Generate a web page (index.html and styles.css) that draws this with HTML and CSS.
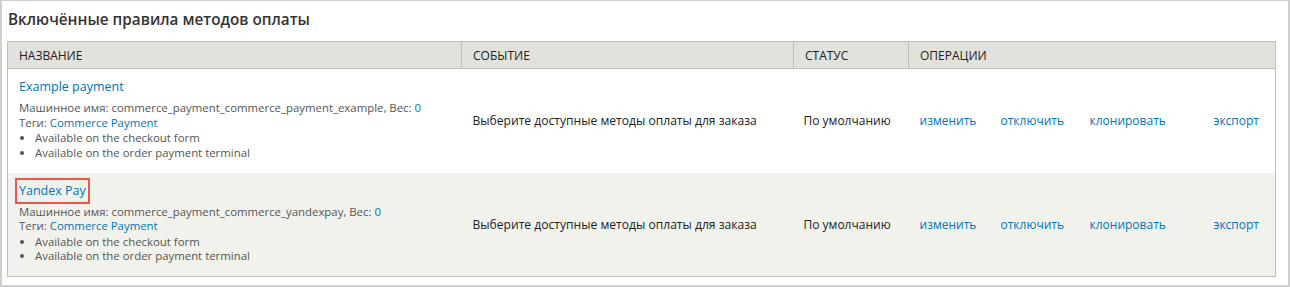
FILE: index.html
```html
<!DOCTYPE html>
<html lang="ru">
<head>
<meta charset="utf-8">
<link rel="stylesheet" href="styles.css">
</head>
<body>
<div class="frame">
  <h2 class="title">Включённые правила методов оплаты</h2>
  <table class="rules">
    <thead>
      <tr>
        <th class="c-name">Название</th>
        <th class="c-event">Событие</th>
        <th class="c-status">Статус</th>
        <th class="c-ops">Операции</th>
      </tr>
    </thead>
    <tbody>
      <tr class="odd">
        <td class="c-name">
          <a class="rule-link" href="#">Example payment</a>
          <div class="desc">
            <div>Машинное имя: commerce_payment_commerce_payment_example, Вес: <a href="#">0</a></div>
            <div>Теги: <a href="#">Commerce Payment</a></div>
            <ul class="caps">
              <li>Available on the checkout form</li>
              <li>Available on the order payment terminal</li>
            </ul>
          </div>
        </td>
        <td class="c-event">Выберите доступные методы оплаты для заказа</td>
        <td class="c-status">По умолчанию</td>
        <td class="c-ops">
          <div class="ops">
            <a href="#" class="op op-edit">изменить</a>
            <a href="#" class="op op-off">отключить</a>
            <a href="#" class="op op-clone">клонировать</a>
            <a href="#" class="op op-export">экспорт</a>
          </div>
        </td>
      </tr>
      <tr class="even">
        <td class="c-name">
          <a class="rule-link highlighted" href="#">Yandex Pay</a>
          <div class="desc">
            <div>Машинное имя: commerce_payment_commerce_yandexpay, Вес: <a href="#">0</a></div>
            <div>Теги: <a href="#">Commerce Payment</a></div>
            <ul class="caps">
              <li>Available on the checkout form</li>
              <li>Available on the order payment terminal</li>
            </ul>
          </div>
        </td>
        <td class="c-event">Выберите доступные методы оплаты для заказа</td>
        <td class="c-status">По умолчанию</td>
        <td class="c-ops">
          <div class="ops">
            <a href="#" class="op op-edit">изменить</a>
            <a href="#" class="op op-off">отключить</a>
            <a href="#" class="op op-clone">клонировать</a>
            <a href="#" class="op op-export">экспорт</a>
          </div>
        </td>
      </tr>
    </tbody>
  </table>
</div>
</body>
</html>
```
FILE: styles.css
```css
html, body {
  margin: 0;
  padding: 0;
  background: #fff;
}
body {
  font-family: "Open Sans", "DejaVu Sans", sans-serif;
  color: #333;
  width: 1290px;
  height: 287px;
  overflow: hidden;
}
.frame {
  box-sizing: border-box;
  width: 1290px;
  height: 287px;
  border: 2px solid #cfcfcf;
  border-top: 1px solid #cfcfcf;
  padding: 0 12px 0 5px;
}
.title {
  margin: 0;
  padding: 8px 0 0 1px;
  height: 30px;
  box-sizing: border-box;
  font-size: 15.3px;
  font-weight: 600;
  color: #333;
}
.rules {
  margin-top: 10px;
  width: 1269px;
  border-collapse: collapse;
  border: 1px solid #bebfb9;
  font-size: 12px;
}
.rules th {
  background: #e1e2dc;
  text-align: left;
  font-weight: 400;
  text-transform: uppercase;
  color: #222;
  height: 26px;
  padding: 0 11px;
  border-bottom: 1px solid #bebfb9;
  border-left: 1px solid #bebfb9;
}
.rules th:first-child { border-left: none; }
.rules td {
  vertical-align: middle;
  padding: 0 11px;
  color: #222;
}
.rules th.c-name { width: 431px; }
.rules th.c-event { width: 309px; }
.rules th.c-status { width: 92px; }
tr.odd { background: #fff; height: 104px; }
tr.even { background: #f2f2ec; height: 104px; }
.rules td.c-name { padding-top: 0; padding-bottom: 3px; }
.rules td.c-event { font-size: 12.1px; }
.rules td.c-status { padding-left: 10px; }
a { color: #0074bd; text-decoration: none; }
.rule-link {
  display: inline-block;
  font-size: 12.5px;
  line-height: 18px;
}
.rule-link.highlighted {
  outline: 2px solid #f0554a;
  outline-offset: 2px;
}
.desc {
  margin-top: 5px;
  font-size: 11.4px;
  line-height: 14.5px;
  color: #555;
}
.caps {
  margin: 1px 0 0;
  padding: 0 0 0 16px;
}
.caps li { line-height: 14.5px; }
.ops {
  display: flex;
  align-items: center;
}
.op { font-size: 12px; }
.op-edit { width: 81px; }
.op-off { width: 89px; }
.op-clone { width: 124px; }
```
